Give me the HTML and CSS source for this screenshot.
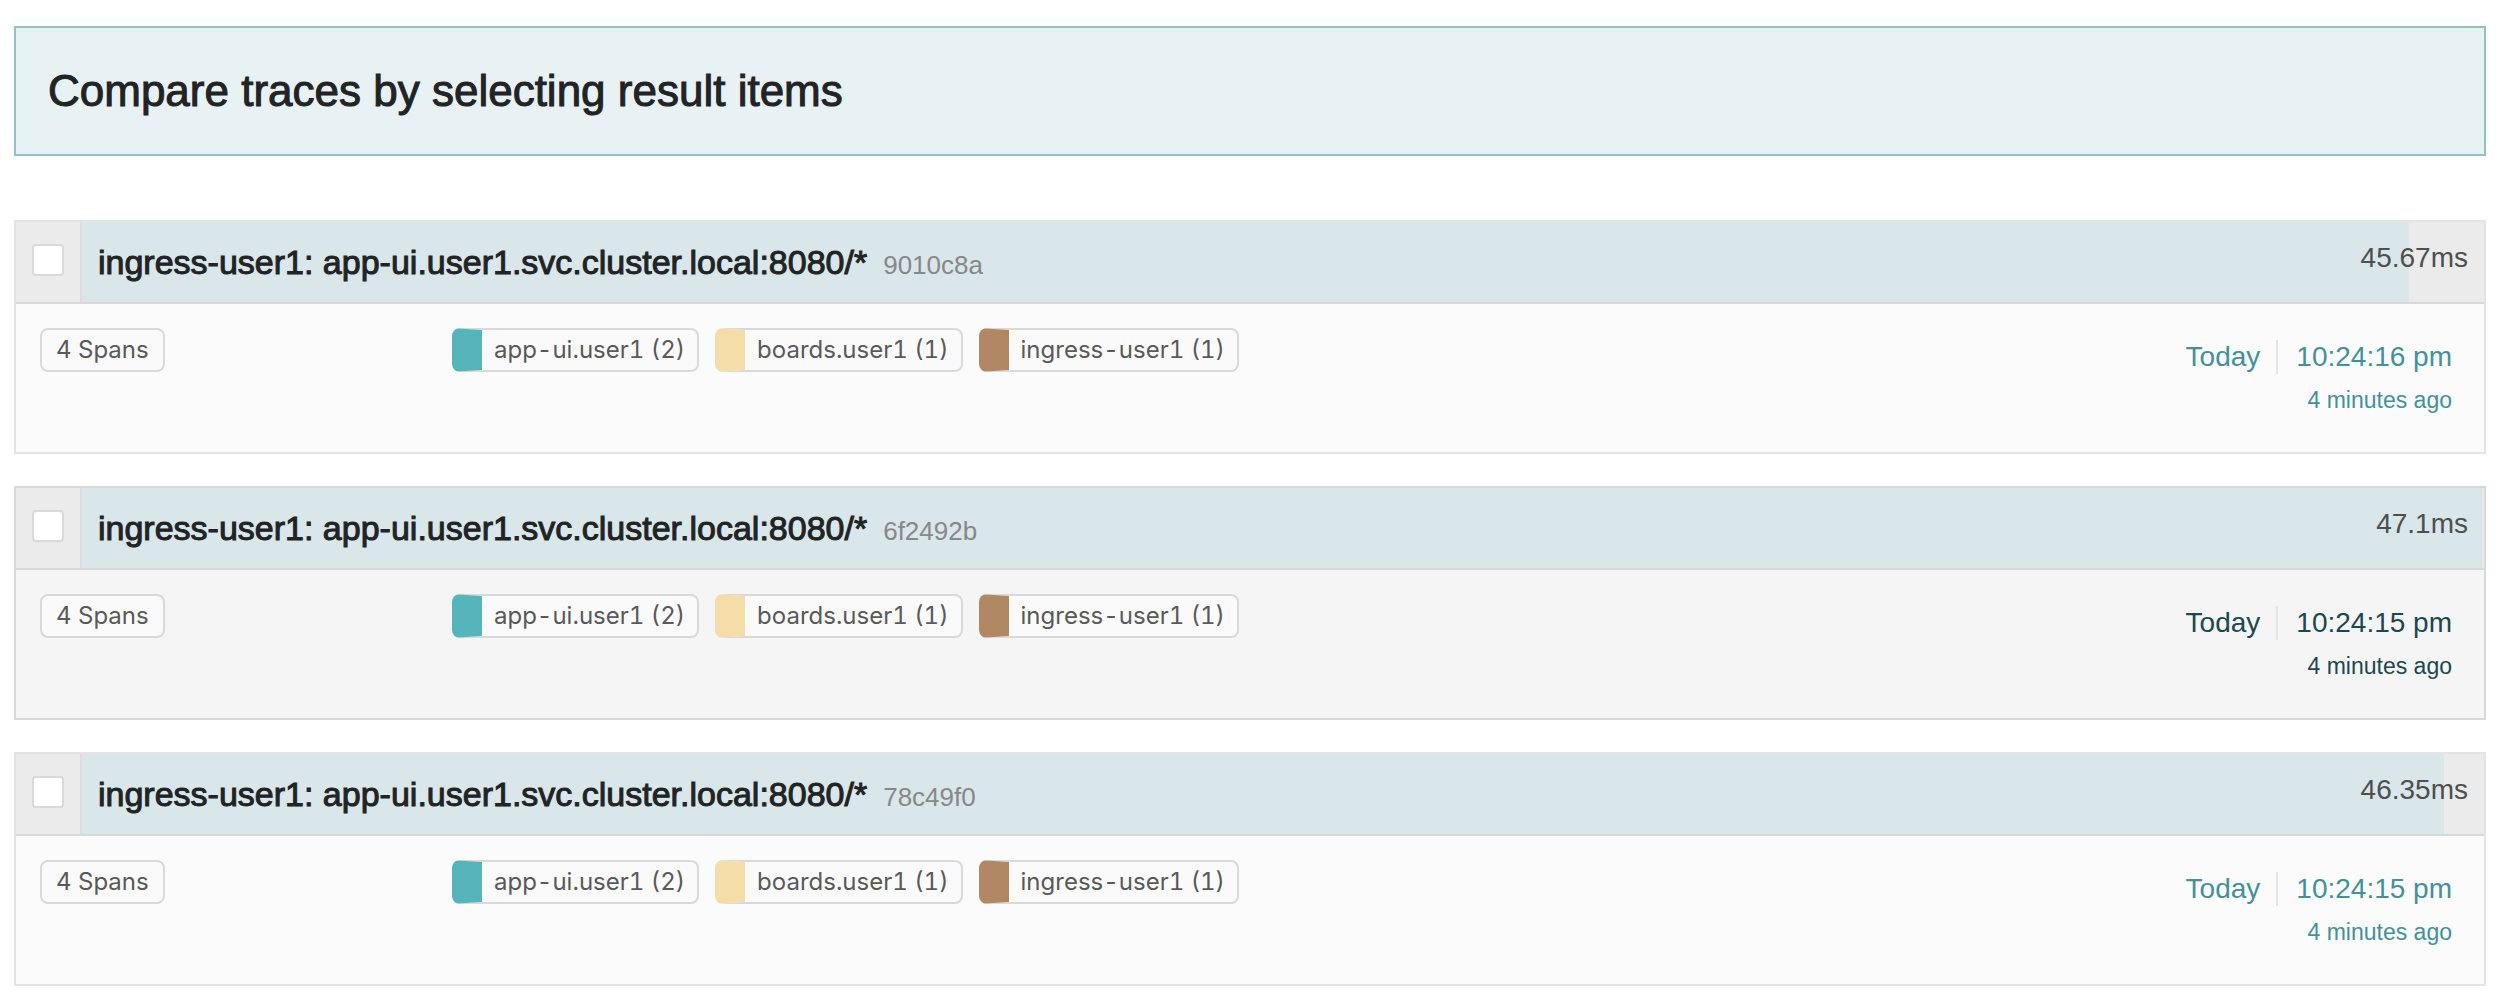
FILE: index.html
```html
<!DOCTYPE html>
<html lang="en">
<head>
<meta charset="utf-8">
<title>Trace results</title>
<link rel="stylesheet" href="styles.css">
</head>
<body>
<main class="results">
  <header class="compare-banner">
    <h1 class="compare-title">Compare traces by selecting result items</h1>
  </header>
  <ul class="trace-list">
    <li class="trace">
      <div class="trace-head">
        <label class="trace-select"><input class="checkbox" type="checkbox" aria-label="Select trace 9010c8a"></label>
        <a class="trace-link" href="#9010c8a">
          <span class="bar-track"><span class="bar" style="width: 96.96%"></span></span>
          <span class="trace-label">
            <span class="trace-name">ingress-user1: app-ui.user1.svc.cluster.local:8080/*</span>
            <span class="trace-id">9010c8a</span>
            <span class="duration">45.67ms</span>
          </span>
        </a>
      </div>
      <div class="trace-body">
        <div class="span-count"><span class="tag">4 Spans</span></div>
        <ul class="services">
          <li class="tag service teal">app-ui.user1 (2)</li>
          <li class="tag service sand">boards.user1 (1)</li>
          <li class="tag service brown">ingress-user1 (1)</li>
        </ul>
        <div class="when">
          <div class="when-row"><span class="day">Today</span><span class="time">10:24:16 pm</span></div>
          <div class="ago">4 minutes ago</div>
        </div>
      </div>
    </li>
    <li class="trace active">
      <div class="trace-head">
        <label class="trace-select"><input class="checkbox" type="checkbox" aria-label="Select trace 6f2492b"></label>
        <a class="trace-link" href="#6f2492b">
          <span class="bar-track"><span class="bar" style="width: 100%"></span></span>
          <span class="trace-label">
            <span class="trace-name">ingress-user1: app-ui.user1.svc.cluster.local:8080/*</span>
            <span class="trace-id">6f2492b</span>
            <span class="duration">47.1ms</span>
          </span>
        </a>
      </div>
      <div class="trace-body">
        <div class="span-count"><span class="tag">4 Spans</span></div>
        <ul class="services">
          <li class="tag service teal">app-ui.user1 (2)</li>
          <li class="tag service sand">boards.user1 (1)</li>
          <li class="tag service brown">ingress-user1 (1)</li>
        </ul>
        <div class="when">
          <div class="when-row"><span class="day">Today</span><span class="time">10:24:15 pm</span></div>
          <div class="ago">4 minutes ago</div>
        </div>
      </div>
    </li>
    <li class="trace">
      <div class="trace-head">
        <label class="trace-select"><input class="checkbox" type="checkbox" aria-label="Select trace 78c49f0"></label>
        <a class="trace-link" href="#78c49f0">
          <span class="bar-track"><span class="bar" style="width: 98.41%"></span></span>
          <span class="trace-label">
            <span class="trace-name">ingress-user1: app-ui.user1.svc.cluster.local:8080/*</span>
            <span class="trace-id">78c49f0</span>
            <span class="duration">46.35ms</span>
          </span>
        </a>
      </div>
      <div class="trace-body">
        <div class="span-count"><span class="tag">4 Spans</span></div>
        <ul class="services">
          <li class="tag service teal">app-ui.user1 (2)</li>
          <li class="tag service sand">boards.user1 (1)</li>
          <li class="tag service brown">ingress-user1 (1)</li>
        </ul>
        <div class="when">
          <div class="when-row"><span class="day">Today</span><span class="time">10:24:15 pm</span></div>
          <div class="ago">4 minutes ago</div>
        </div>
      </div>
    </li>
  </ul>
</main>
</body>
</html>
```
FILE: styles.css
```css
* {
  box-sizing: border-box;
}

body {
  margin: 0;
  background: #fff;
  color: #212324;
  font-family: "Liberation Sans", Arial, sans-serif;
  font-size: 28px;
}

ul {
  margin: 0;
  padding: 0;
  list-style: none;
}

.results {
  display: flex;
  flex-direction: column;
  gap: 64px;
  padding: 26px 22px 14px 14px;
}

.compare-banner {
  padding: 38px 32px;
  border: 2px solid #93c2c4;
  background: #e8f1f3;
}

.compare-title {
  margin: 0;
  font-size: 44px;
  font-weight: 400;
  line-height: 50px;
  -webkit-text-stroke: 1px currentColor;
}

.trace-list {
  display: flex;
  flex-direction: column;
  gap: 32px;
}

.trace {
  border: 2px solid #e4e4e4;
  background: #fbfbfb;
}

.trace.active {
  border-color: #d8d8d8;
  background: #f5f5f5;
}

.trace-head {
  display: flex;
  border-bottom: 2px solid #d8d8d8;
  background: #ebebeb;
}

.trace-select {
  padding: 22px 16px 26px;
  border-right: 2px solid #ddd;
}

.checkbox {
  display: block;
  width: 32px;
  height: 32px;
  margin: 0;
  appearance: none;
  border: 2px solid #d9d9d9;
  border-radius: 4px;
  background: #fff;
}

.checkbox:checked {
  background: #199;
}

.trace-link {
  display: grid;
  flex: 1;
  color: inherit;
  text-decoration: none;
}

.bar-track,
.trace-label {
  grid-area: 1 / 1;
}

.bar-track {
  display: flex;
  margin-right: 2px;
}

.bar {
  background: #d9e6ea;
}

.trace-label {
  display: flex;
  align-items: baseline;
  gap: 16px;
  padding: 20px 16px 12px;
  line-height: 40px;
}

.trace-name {
  font-size: 34px;
  -webkit-text-stroke: 1px currentColor;
}

.trace-id {
  color: #888;
  font-size: 26px;
}

.duration {
  align-self: flex-start;
  margin-left: auto;
  color: #4f4f4f;
  line-height: 32px;
}

.trace-body {
  display: flex;
  align-items: flex-start;
  padding: 24px 32px 36px 24px;
}

.span-count {
  flex: 0 0 412px;
  display: flex;
}

.services {
  display: flex;
  flex: 1;
  flex-wrap: wrap;
  gap: 16px;
}

.tag {
  padding: 0 14px;
  border: 2px solid #d9d9d9;
  border-radius: 8px;
  background: #fafafa;
  color: #595959;
  font-family: Inter, "Liberation Sans", sans-serif;
  font-size: 24px;
  font-variant-numeric: tabular-nums;
  line-height: 40px;
}

.service {
  padding: 0 12px;
  border-left-width: 30px;
}

.teal {
  border-left-color: #56b5bb;
}

.sand {
  border-left-color: #f5dda9;
}

.brown {
  border-left-color: #b08863;
}

.when {
  padding-top: 12px;
  color: #43919a;
  text-align: right;
}

.active .when {
  color: #1b4850;
}

.when-row {
  display: flex;
  justify-content: flex-end;
  line-height: 34px;
}

.day {
  padding-right: 16px;
}

.time {
  padding-left: 18px;
  border-left: 2px solid #e4e4e4;
}

.ago {
  padding-top: 10px;
  font-size: 23px;
  line-height: 32px;
}
```
